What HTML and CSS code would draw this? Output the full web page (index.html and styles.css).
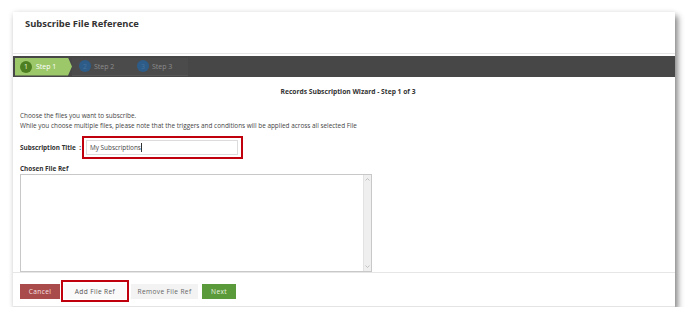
FILE: index.html
```html
<!DOCTYPE html>
<html>
<head>
<meta charset="utf-8">
<link rel="stylesheet" href="styles.css">
</head>
<body>
<div class="stage">
  <div class="card">
    <div class="card-header"><h1 class="title">Subscribe File Reference</h1></div>
    <div class="steps">
      <div class="step active"><span class="num">1</span><span class="label">Step 1</span></div>
      <div class="step"><span class="num">2</span><span class="label">Step 2</span></div>
      <div class="step"><span class="num">3</span><span class="label">Step 3</span></div>
    </div>
    <div class="content">
      <div class="wizard-title">Records Subscription Wizard - Step 1 of 3</div>
      <p class="intro">Choose the files you want to subscribe.<br>While you choose multiple files, please note that the triggers and conditions will be applied across all selected File</p>
      <div class="field-row">
        <span class="field-label inline">Subscription Title &nbsp;:</span>
        <div class="highlight highlight-input">
          <div class="text-input">My Subscriptions<span class="caret"></span></div>
        </div>
      </div>
      <div class="field-label block">Chosen File Ref</div>
      <div class="textarea">
        <div class="textarea-body"></div>
        <div class="scrollbar">
          <svg width="5" height="3" viewBox="0 0 5 3"><path d="M0.5 2.5 L2.5 0.5 L4.5 2.5" fill="none" stroke="#b5b5b5" stroke-width="0.8"/></svg>
          <svg width="5" height="3" viewBox="0 0 5 3"><path d="M0.5 0.5 L2.5 2.5 L4.5 0.5" fill="none" stroke="#b5b5b5" stroke-width="0.8"/></svg>
        </div>
      </div>
    </div>
    <div class="footer">
      <button class="btn btn-cancel">Cancel</button>
      <div class="highlight highlight-btn"><button class="btn btn-light">Add File Ref</button></div>
      <button class="btn btn-gray">Remove File Ref</button>
      <button class="btn btn-next">Next</button>
    </div>
  </div>
</div>
</body>
</html>
```

FILE: styles.css
```css
* { box-sizing: border-box; }
html, body { margin: 0; padding: 0; background: #fff; }
body { font-family: "Open Sans", "Noto Sans", sans-serif; color: #333; }

.stage { padding: 12px 0 0 13px; }

.card {
  width: 662px;
  height: 295px;
  background: #fff;
  display: flex;
  flex-direction: column;
  box-shadow: 3px 4px 6px rgba(0,0,0,0.45), 0 0 6px rgba(0,0,0,0.08);
  border-bottom: 1px solid #e4e4e4;
}

.card-header {
  height: 42px;
  padding: 6px 12px 0;
  border-bottom: 1px solid #e6e6e6;
}
.title {
  margin: 0;
  font-size: 9.4px;
  line-height: 12px;
  font-weight: 700;
  color: #333;
}

.steps {
  margin-top: 2px;
  height: 21px;
  background: #474747;
  display: flex;
  align-items: center;
  padding-left: 2px;
}
.step {
  height: 18px;
  display: flex;
  align-items: center;
  padding-left: 7px;
  width: 58px;
  font-size: 7px;
  color: #8c8c8c;
  border-bottom: 1px solid #565656;
  background: #4b4b4b;
}
.step.active {
  width: 57px;
  padding-left: 5px;
  background: #9cc86a;
  color: #fff;
  border-bottom: none;
  clip-path: polygon(0 0, 53px 0, 57px 50%, 53px 100%, 0 100%);
}
.num {
  width: 12px;
  height: 12px;
  border-radius: 50%;
  background: #2d5c88;
  color: #46729c;
  display: flex;
  align-items: center;
  justify-content: center;
  font-size: 7px;
  margin-right: 3px;
  flex: none;
}
.step.active .num { background: #4d7f22; color: #e8f2dc; margin-right: 4px; }

.content {
  padding: 0 7px;
  flex: 1;
  border-bottom: 1px solid #e6e6e6;
  display: flex;
  flex-direction: column;
  align-items: flex-start;
}
.wizard-title {
  align-self: center;
  margin-top: 10px;
  margin-left: 8px;
  font-size: 6.7px;
  line-height: 10px;
  font-weight: 700;
  color: #333;
}
.intro {
  margin: 14px 0 0;
  font-size: 6.4px;
  line-height: 10px;
  color: #444;
}

.field-row {
  margin-top: 5px;
  display: flex;
  align-items: center;
}
.field-label {
  font-size: 6.4px;
  line-height: 10px;
  font-weight: 700;
  color: #333;
  white-space: nowrap;
}
.field-label.inline { width: 62px; }
.field-label.block { margin-top: 5px; }

.highlight { border: 2px solid #c0000c; }
.highlight-input {
  width: 161px;
  height: 23px;
  padding: 2px;
}
.text-input {
  width: 152px;
  height: 15px;
  border: 1px solid #dcdcdc;
  font-size: 6.4px;
  line-height: 13px;
  padding-left: 3px;
  color: #444;
  display: flex;
  align-items: center;
}
.caret { width: 1px; height: 9px; background: #333; margin-left: 0.5px; }

.textarea {
  width: 352px;
  height: 98px;
  border: 1px solid #c8c8c8;
  display: flex;
}
.textarea-body { flex: 1; }
.scrollbar {
  width: 8px;
  background: #efefef;
  border-left: 1px solid #e2e2e2;
  display: flex;
  flex-direction: column;
  justify-content: space-between;
  align-items: center;
  padding: 3px 0;
}
.scrollbar svg { display: block; }

.footer {
  height: 33px;
  display: flex;
  align-items: center;
  padding-left: 7px;
  padding-top: 3px;
}
.btn {
  border: none;
  height: 15px;
  padding: 0;
  font-family: inherit;
  font-size: 6.6px;
  letter-spacing: 0.35px;
  display: flex;
  align-items: center;
  justify-content: center;
}
.btn-cancel { width: 40px; background: #aa4b4b; color: #f6e0e0; }
.highlight-btn { margin-left: 1px; width: 68px; height: 22px; display: flex; align-items: center; justify-content: center; }
.btn-light { width: 62px; background: #fafafa; color: #555; }
.btn-gray { width: 67px; margin-left: 2px; background: #f3f3f3; color: #666; }
.btn-next { width: 34px; margin-left: 4px; background: #5a9a3a; color: #eaf4e2; }
```
